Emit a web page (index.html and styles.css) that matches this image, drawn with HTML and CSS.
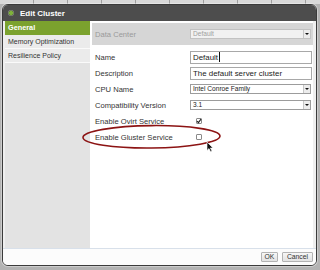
FILE: index.html
```html
<!DOCTYPE html>
<html>
<head>
<meta charset="utf-8">
<link rel="stylesheet" href="styles.css">
</head>
<body>
<div class="dialog">
  <div class="titlebar"><span class="dot"></span><span class="title">Edit Cluster</span></div>
  <div class="body">
    <ul class="nav">
      <li class="nav-item active">General</li>
      <li class="nav-item">Memory Optimization</li>
      <li class="nav-item">Resilience Policy</li>
    </ul>
    <div class="panel">
      <div class="row band">
        <label class="lbl muted">Data Center</label>
        <div class="select disabled"><span class="sel-text">Default</span><span class="arrow"></span></div>
      </div>
      <div class="row first">
        <label class="lbl">Name</label>
        <div class="input">Default<span class="caret"></span></div>
      </div>
      <div class="row">
        <label class="lbl">Description</label>
        <div class="input">The default server cluster</div>
      </div>
      <div class="row">
        <label class="lbl">CPU Name</label>
        <div class="select"><span class="sel-text">Intel Conroe Family</span><span class="arrow"></span></div>
      </div>
      <div class="row">
        <label class="lbl">Compatibility Version</label>
        <div class="select"><span class="sel-text">3.1</span><span class="arrow"></span></div>
      </div>
      <div class="row">
        <label class="lbl">Enable Ovirt Service</label>
        <span class="cb"><svg viewBox="0 0 6 6" width="6" height="6"><path d="M1 3.2 L2.4 4.6 L5 1.2" fill="none" stroke="#222" stroke-width="1.1"/></svg></span>
      </div>
      <div class="row">
        <label class="lbl">Enable Gluster Service</label>
        <span class="cb"></span>
      </div>
    </div>
  </div>
  <div class="footer">
    <button class="btn ok">OK</button>
    <button class="btn cancel">Cancel</button>
  </div>
</div>
<svg class="annot" width="320" height="270" viewBox="0 0 320 270">
  <ellipse cx="151.5" cy="136.8" rx="68.5" ry="11.2" fill="none" stroke="#8c1313" stroke-width="1.6" transform="rotate(-0.6 151.5 136.8)"/>
  <path d="M207 142 L207 150.5 L209 148.6 L210.6 151.8 L212 151.1 L210.4 148 L213 148 Z" fill="#111" stroke="#fff" stroke-width="0.6" stroke-linejoin="round"/>
</svg>
</body>
</html>
```
FILE: styles.css
```css
html, body {
  margin: 0;
  width: 320px;
  height: 270px;
  overflow: hidden;
}
body {
  position: relative;
  box-sizing: border-box;
  padding: 4px 0 0 2px;
  font-family: "Liberation Sans", Arial, sans-serif;
  background:
    repeating-linear-gradient(90deg, #d9d9d9 0 33px, #9e9e9e 33px 34px) 0 0 / 100% 4px no-repeat,
    #b3b3b3;
}
.dialog {
  width: 315px;
  height: 262px;
  box-sizing: border-box;
  border: 1px solid #3b3b3b;
  border-radius: 6px;
  overflow: hidden;
  background: #fbfbfb;
  display: flex;
  flex-direction: column;
  box-shadow: 0 0 0 1px rgba(255,255,255,0.35);
}
.titlebar {
  height: 16px;
  flex: none;
  background: #4d4d4d;
  display: flex;
  align-items: center;
}
.dot {
  width: 6px;
  height: 6px;
  margin-left: 5px;
  border-radius: 50%;
  background: radial-gradient(circle, #7fb23a 0 1.6px, #5f7f3a 2.2px, #8f8f8f 3px);
}
.title {
  margin-left: 6px;
  color: #fff;
  font-weight: bold;
  font-size: 8px;
}
.body {
  height: 227px;
  flex: none;
  display: flex;
  padding: 0 3px 0 2px;
  background: #efefef;
}
.nav {
  width: 85px;
  flex: none;
  margin: 0;
  padding: 0;
  list-style: none;
  background: #e3e3e3;
}
.nav-item {
  height: 13px;
  line-height: 13px;
  padding-left: 3px;
  font-size: 7px;
  color: #333;
  background: #ebebeb;
  border-bottom: 1px solid #fafafa;
}
.nav-item.active {
  height: 14px;
  line-height: 14px;
  border-bottom: 0;
  background: #7ba22e;
  color: #fff;
  font-weight: bold;
  font-size: 7.3px;
}
.panel {
  width: 223px;
  flex: none;
  box-sizing: border-box;
  padding: 2px 0 0 2px;
  background: #fff;
}
.row {
  height: 16px;
  display: flex;
  align-items: center;
}
.row.band {
  height: 22px;
  background: #d6d6d6;
}
.row.first {
  margin-top: 4px;
}
.lbl {
  width: 98px;
  flex: none;
  box-sizing: border-box;
  padding-left: 3px;
  font-size: 7.6px;
  color: #333;
  white-space: nowrap;
}
.lbl.muted {
  color: #9a9a9a;
}
.input {
  width: 122px;
  height: 13px;
  box-sizing: border-box;
  border: 1px solid #a8a8a8;
  padding-left: 2px;
  font-size: 7.9px;
  line-height: 11px;
  color: #222;
  display: flex;
  align-items: center;
  white-space: nowrap;
}
.caret {
  width: 1px;
  height: 10px;
  margin-left: 1px;
  background: #111;
}
.select {
  width: 121px;
  height: 10px;
  box-sizing: border-box;
  border: 1px solid #9c9c9c;
  background: #fff;
  display: flex;
  align-items: stretch;
}
.sel-text {
  flex: 1;
  padding-left: 2px;
  font-size: 6.6px;
  line-height: 8px;
  color: #222;
}
.select.disabled {
  background: #f1f1f1;
  border-color: #c2c2c2;
}
.select.disabled .sel-text {
  color: #a0a0a0;
}
.arrow {
  width: 6px;
  flex: none;
  position: relative;
  background: #ececec;
  border-left: 1px solid #c6c6c6;
}
.arrow::after {
  content: "";
  position: absolute;
  left: 1px;
  top: 3px;
  border-left: 2px solid transparent;
  border-right: 2px solid transparent;
  border-top: 2px solid #111;
}
.cb {
  width: 6px;
  height: 6px;
  margin-left: 6px;
  box-sizing: border-box;
  border: 1px solid #8a8a8a;
  border-radius: 1px;
  background: #fff;
  display: flex;
  align-items: center;
  justify-content: center;
  overflow: visible;
}
.cb svg {
  flex: none;
  margin: -1px;
  display: block;
}
.footer {
  flex: 1;
  border-top: 1px solid #d8e0ea;
  display: flex;
  justify-content: flex-end;
  align-items: flex-start;
  gap: 4px;
  padding: 3px 3px 0 0;
  background: #fcfcfc;
}
.btn {
  height: 10px;
  margin: 0;
  padding: 0;
  box-sizing: border-box;
  border: 1px solid #b3b3b3;
  border-radius: 1px;
  background: linear-gradient(#f7f7f7, #e2e2e2);
  font-family: "Liberation Sans", Arial, sans-serif;
  font-size: 6.8px;
  line-height: 8px;
  color: #333;
}
.btn.ok { width: 17px; }
.btn.cancel { width: 31px; }
.annot {
  position: absolute;
  left: 0;
  top: 0;
  pointer-events: none;
}
```
